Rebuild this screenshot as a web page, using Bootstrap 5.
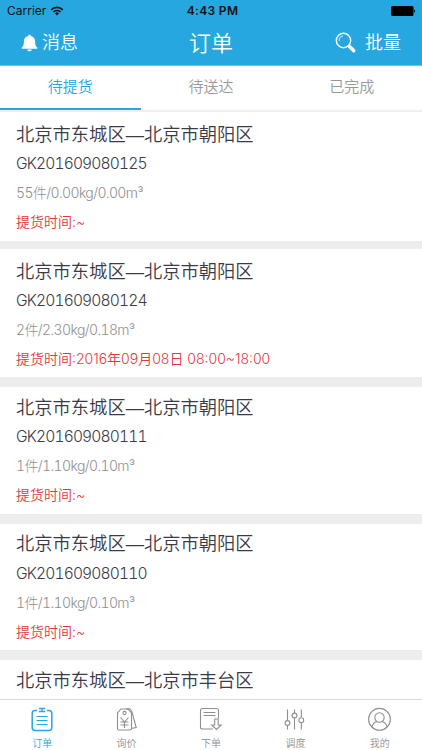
<!DOCTYPE html>
<html lang="zh-CN">
<head>
<meta charset="utf-8">
<meta name="viewport" content="width=device-width, initial-scale=1">
<title>订单</title>
<link href="https://cdn.jsdelivr.net/npm/bootstrap@5.3.0/dist/css/bootstrap.min.css" rel="stylesheet">
<style>
body{font-family:Inter,"Noto Sans CJK SC",sans-serif;font-weight:350;height:750px;color:#3c3a46;line-height:1}
.app-top{background:#26a7e0;height:66px;border-bottom:1px solid #78c1e5}
.status-row{height:21px;font:400 12px/21px Inter,sans-serif;color:#111;padding:0 6px 0 7px}
.status-row>*{flex:1 1 0}
.clock{font-weight:600;letter-spacing:.35px;padding-left:2px}
.title-row{height:44px;color:#fff;font-size:18px;padding:0 21px}
.title-row>*{flex:1 1 0}
.title-text{font-size:22px}
.tab-row{height:46px;border-bottom:2px solid #efefef;font-size:15px}
.tab-row a{color:#999;text-decoration:none;padding-bottom:3px}
.tab-row a.current{color:#26a7e0;border-bottom:2px solid #26a7e0;padding-bottom:1px}
.order{height:136.4px;border-bottom:10px solid #ededed;padding-left:16px;white-space:nowrap}
.order:first-child{height:137px;border-bottom-width:8px;padding-top:2px}
.order:nth-child(2){height:138.4px;padding-top:2px}
.route{font-family:"Liberation Sans","Noto Sans CJK SC",sans-serif;font-size:18.3px;line-height:24px;padding-top:8.6px}
.code{font-size:15.6px;font-weight:300;font-feature-settings:"tnum";letter-spacing:-.86px;line-height:24px;margin-top:5.4px}
.load{font-size:14px;font-weight:300;font-feature-settings:"tnum";letter-spacing:-.63px;line-height:20px;margin-top:7px;color:#8f8f8f}
.pick{font-size:14px;line-height:20px;margin-top:9px;color:#e0393e}
.tabs-bottom{height:51px;border-top:1px solid #d9d9d9;font-size:10px;color:#8f8f8f}
.tabs-bottom a{flex:1 1 0;color:inherit;text-decoration:none}
.tabs-bottom svg{width:26px;height:26px;margin-top:7px;margin-bottom:5px;fill:none;stroke:currentColor;stroke-width:1.1}
.tabs-bottom .current{color:#26a7e0}
</style>
<script src="https://cdn.jsdelivr.net/npm/bootstrap@5.3.0/dist/js/bootstrap.bundle.min.js"></script>
</head>
<body class="d-flex flex-column overflow-hidden bg-white">
<header class="app-top flex-shrink-0">
 <div class="status-row d-flex align-items-center">
  <div class="d-flex align-items-center gap-1">Carrier
   <svg width="14" height="10" viewBox="0 0 14 10" fill="none" stroke="#111" stroke-width="1.7"><path d="M1.2 3.8a8.2 8.2 0 0 1 11.6 0M3.4 6a5.1 5.1 0 0 1 7.2 0"/><path d="M5 7.3a2.8 2.8 0 0 1 4 0L7 9.5z" fill="#111" stroke="none"/></svg></div>
  <div class="clock text-center">4:43 PM</div>
  <div class="d-flex justify-content-end"><svg width="25" height="10" viewBox="0 0 25 10"><rect width="22.5" height="10" rx="1.5"/><path d="M23.2 3.2q2 1.8 0 3.6z"/></svg></div>
 </div>
 <div class="title-row d-flex align-items-center">
  <div class="d-flex align-items-center"><svg class="me-1" width="17" height="18" viewBox="0 0 17 18" fill="#fff"><path d="M8.5.7c.8 0 1.3.5 1.4 1.3 2.8.7 4.2 2.6 4.2 5.2 0 3.6.5 5.1 2.2 6.3v1.3H.7v-1.3c1.7-1.2 2.2-2.7 2.2-6.3 0-2.6 1.4-4.5 4.2-5.2C7.2 1.2 7.7.7 8.5.7zM6.3 15.4h4.4a2.2 1.9 0 0 1-4.4 0z"/></svg>消息</div>
  <div class="title-text text-center">订单</div>
  <div class="d-flex align-items-center justify-content-end"><svg class="me-2" width="22" height="22" viewBox="0 0 22 22" fill="none" stroke="#fff"><circle cx="8.5" cy="8.5" r="7.2" stroke-width="1.4"/><path d="M4.2 9A4.6 4.6 0 0 1 8 4" stroke-width=".8"/><path d="M14.5 14.5l4.3 4.3" stroke-width="3.4" stroke-linecap="round"/></svg>批量</div>
 </div>
</header>
<nav class="tab-row d-flex flex-shrink-0">
 <a href="#" class="current col-4 d-flex align-items-center justify-content-center">待提货</a>
 <a href="#" class="col-4 d-flex align-items-center justify-content-center">待送达</a>
 <a href="#" class="col-4 d-flex align-items-center justify-content-center">已完成</a>
</nav>
<main class="flex-grow-1 overflow-hidden">
 <article class="order"><div class="route">北京市东城区—北京市朝阳区</div><div class="code">GK201609080125</div><div class="load">55件/0.00kg/0.00m³</div><div class="pick">提货时间:~</div></article>
 <article class="order"><div class="route">北京市东城区—北京市朝阳区</div><div class="code">GK201609080124</div><div class="load">2件/2.30kg/0.18m³</div><div class="pick">提货时间:2016年09月08日 08:00~18:00</div></article>
 <article class="order"><div class="route">北京市东城区—北京市朝阳区</div><div class="code">GK201609080111</div><div class="load">1件/1.10kg/0.10m³</div><div class="pick">提货时间:~</div></article>
 <article class="order"><div class="route">北京市东城区—北京市朝阳区</div><div class="code">GK201609080110</div><div class="load">1件/1.10kg/0.10m³</div><div class="pick">提货时间:~</div></article>
 <article class="order"><div class="route">北京市东城区—北京市丰台区</div></article>
</main>
<footer class="tabs-bottom d-flex flex-shrink-0 bg-white">
 <a href="#" class="current d-flex flex-column align-items-center"><svg viewBox="0 0 26 26"><path d="M8 3.5H6Q3.2 3.5 3.2 6.5V20.5Q3.2 23.5 6 23.5H20Q22.8 23.5 22.8 20.5V6.5Q22.8 3.5 20 3.5H18" stroke-width="1.5"/><path d="M10 1.5h6M10 4.5h6M13 1.5v3" stroke-width="1.3"/><path d="M7.5 9.5h11M7.5 13.5h11M7.5 17.5h11" stroke-width="1.2"/></svg>订单</a>
 <a href="#" class="d-flex flex-column align-items-center"><svg viewBox="0 0 26 26"><path d="M7 2h7l3.5 4v15.5q0 1.5-1.5 1.5H5q-1.5 0-1.5-1.5V6z"/><path d="M12 2.5q1-1.5 4-.5l2 3 4.2 15.5-5 1"/><circle cx="10.5" cy="6" r="1.6"/><path d="M6.5 10.5l4 4.5 4-4.5M6.5 15h8M6.5 18h8M10.5 15v6"/></svg>询价</a>
 <a href="#" class="d-flex flex-column align-items-center"><svg viewBox="0 0 26 26"><path d="M15 22H4.5q-2 0-2-2V3.5q0-2 2-2h14q2 0 2 2v8M5.5 5.5h12M5.5 8.5h12"/><path d="M16.7 12h3.5v6h3l-4.7 4.5-4.8-4.5h3z"/></svg>下单</a>
 <a href="#" class="d-flex flex-column align-items-center"><svg viewBox="0 0 26 26"><path d="M5.5 2.5v10.5M5.5 18.5v4M12.5 2.5v3.5M12.5 11v11.5M19.3 2.5v7.5M19.3 15.5v7"/><circle cx="5.5" cy="16" r="2.4"/><circle cx="12.5" cy="8.5" r="2.4"/><circle cx="19.3" cy="13.2" r="2.4"/></svg>调度</a>
 <a href="#" class="d-flex flex-column align-items-center"><svg viewBox="0 0 26 26"><circle cx="12.5" cy="12.3" r="10.9"/><circle cx="12.5" cy="10.5" r="4.7"/><path d="M5 20q1-4.500 5-5.500M20 20q-1-4.500-5-5.500"/></svg>我的</a>
</footer>
</body>
</html>
